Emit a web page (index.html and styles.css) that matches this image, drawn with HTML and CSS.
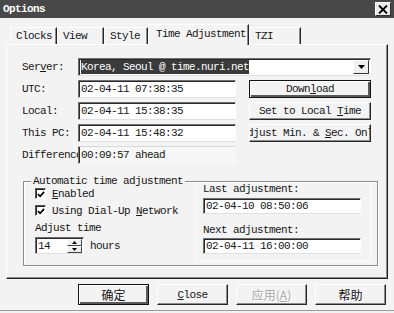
FILE: index.html
```html
<!DOCTYPE html>
<html>
<head>
<meta charset="utf-8">
<link rel="stylesheet" href="styles.css">
</head>
<body>
<div class="window">
  <div class="titlebar">
    <span class="title">Options</span>
    <span class="close"><svg width="10" height="9" viewBox="0 0 10 9"><path d="M1 0.5 L9 8.5 M9 0.5 L1 8.5" stroke="#000" stroke-width="1.8"/></svg></span>
  </div>
  <div class="tabs">
    <div class="tab w-clocks">Clocks</div>
    <div class="tab w-view">View</div>
    <div class="tab w-style">Style</div>
    <div class="tab sel">Time Adjustment</div>
    <div class="tab w-tzi">TZI</div>
  </div>
  <div class="panel">
    <div class="grid">
      <div class="lbl"><span>Ser<u>v</u>er:</span></div>
      <div class="combo">
        <span class="combo-sel">Korea, Seoul @ time.nuri.net</span>
        <span class="combo-btn"><svg width="7" height="4" viewBox="0 0 7 4"><path d="M0 0 H7 L3.5 4 Z" fill="#000"/></svg></span>
      </div>
      <div class="lbl">UTC:</div>
      <div class="field">02-04-11 07:38:35</div>
      <div class="btn default col4"><span>Down<u>l</u>oad</span></div>
      <div class="lbl">Local:</div>
      <div class="field">02-04-11 15:38:35</div>
      <div class="btn col4"><span>Set to Local <u>T</u>ime</span></div>
      <div class="lbl">This PC:</div>
      <div class="field">02-04-11 15:48:32</div>
      <div class="btn col4"><span>Adjust Min. &amp; <u>S</u>ec. Only</span></div>
      <div class="lbl">Difference:</div>
      <div class="field static">00:09:57 ahead</div>
    </div>
    <div class="group">
      <span class="legend">Automatic time adjustment</span>
      <div class="gleft">
        <div class="chkrow"><span class="chk"><svg width="9" height="9" viewBox="0 0 9 9"><path d="M1 4 L3.5 6.5 L8 1.5" stroke="#000" stroke-width="2" fill="none"/></svg></span><span><u>E</u>nabled</span></div>
        <div class="chkrow"><span class="chk"><svg width="9" height="9" viewBox="0 0 9 9"><path d="M1 4 L3.5 6.5 L8 1.5" stroke="#000" stroke-width="2" fill="none"/></svg></span><span>Using Dial-Up <u>N</u>etwork</span></div>
        <div class="txtrow">Adjust time</div>
        <div class="spinrow">
          <div class="spin">
            <span class="spin-val">14</span>
            <span class="spin-btns">
              <span class="sb"><svg width="5" height="3" viewBox="0 0 5 3"><path d="M0 3 H5 L2.5 0 Z" fill="#000"/></svg></span>
              <span class="sb"><svg width="5" height="3" viewBox="0 0 5 3"><path d="M0 0 H5 L2.5 3 Z" fill="#000"/></svg></span>
            </span>
          </div>
          <span>hours</span>
        </div>
      </div>
      <div class="gright">
        <div class="rlabel">Last adjustment:</div>
        <div class="field rfield">02-04-10 08:50:06</div>
        <div class="rlabel next">Next adjustment:</div>
        <div class="field rfield f2">02-04-11 16:00:00</div>
      </div>
    </div>
  </div>
  <div class="footer">
    <div class="btn fbtn default cjk">确定</div>
    <div class="btn fbtn"><span><u>C</u>lose</span></div>
    <div class="btn fbtn disabled cjk"><span>应用(<u>A</u>)</span></div>
    <div class="btn fbtn cjk">帮助</div>
  </div>
</div>
</body>
</html>
```

FILE: styles.css
```css
* { box-sizing: border-box; }
body {
  margin: 0;
  background: #f3f3f3;
  font-family: "Liberation Mono", "Noto Sans CJK SC", monospace;
  font-size: 11px;
  letter-spacing: -0.6px;
  color: #161616;
}
u { text-decoration: underline; text-underline-offset: 1px; }
.window {
  width: 394px;
  height: 313px;
  display: flex;
  flex-direction: column;
  overflow: hidden;
}
.titlebar {
  height: 18px;
  flex: none;
  background: #484848;
  color: #fff;
  display: flex;
  align-items: center;
  justify-content: space-between;
  padding: 0 3px 0 3px;
}
.title { font-weight: bold; font-size: 11px; }
.close {
  width: 16px;
  height: 14px;
  background: #ececec;
  border: 1px solid;
  border-color: #fff #303030 #303030 #fff;
  display: flex;
  align-items: center;
  justify-content: center;
}
.tabs {
  display: flex;
  align-items: flex-end;
  height: 20px;
  margin: 6px 0 0 10px;
  flex: none;
  position: relative;
  z-index: 1;
}
.tab {
  height: 17px;
  border-top: 1px solid #fff;
  border-left: 1px solid #fff;
  border-right: 1px solid #262626;
  box-shadow: inset -1px 0 0 #8c8c8c;
  padding: 0 0 0 5px;
  display: flex;
  align-items: center;
  white-space: nowrap;
}
.w-clocks { width: 47px; }
.w-view { width: 47px; }
.w-style { width: 44px; }
.w-tzi { width: 52px; }
.tab.sel {
  width: 101px;
  height: 21px;
  margin-bottom: -1px;
  background: #f3f3f3;
  padding-left: 7px;
  padding-bottom: 3px;
}
.panel {
  margin: 0 6px;
  height: 235px;
  flex: none;
  border-top: 1px solid #fff;
  border-left: 1px solid #fff;
  border-right: 1px solid #222;
  border-bottom: 1px solid #222;
  box-shadow: inset -1px -1px 0 #8c8c8c;
  padding: 13px 15px 0 15px;
}
.grid {
  display: grid;
  grid-template-columns: 56px 158px 13px 122px;
  grid-auto-rows: 18px;
  row-gap: 4px;
}
.lbl {
  grid-column: 1;
  display: flex;
  align-items: center;
  white-space: nowrap;
  overflow: hidden;
}
.field {
  grid-column: 2;
  background: #fff;
  border: 1px solid;
  border-color: #707070 #fff #e0e0e0 #707070;
  box-shadow: inset 1px 1px 0 #2a2a2a;
  display: flex;
  align-items: center;
  padding-left: 2px;
  white-space: nowrap;
}
.field.static {
  background: #f7f7f7;
  border-color: #d8d8d8 #f7f7f7 #f7f7f7 #707070;
  box-shadow: inset 1px 0 0 #2a2a2a;
}
.combo {
  grid-column: 2 / 5;
  background: #fff;
  border: 1px solid;
  border-color: #707070 #fff #e0e0e0 #707070;
  box-shadow: inset 1px 1px 0 #2a2a2a;
  display: flex;
  align-items: center;
  justify-content: space-between;
  padding: 0 1px 0 2px;
}
.combo-sel {
  background: #3a3a3a;
  color: #fff;
  padding: 1px 0;
  white-space: nowrap;
}
.combo-btn {
  width: 16px;
  height: 14px;
  background: #efefef;
  border: 1px solid;
  border-color: #fff #303030 #303030 #fff;
  display: flex;
  align-items: center;
  justify-content: center;
}
.btn {
  display: flex;
  align-items: center;
  justify-content: center;
  white-space: nowrap;
  overflow: hidden;
  background: #f3f3f3;
  border: 1px solid;
  border-color: #fff #262626 #262626 #fff;
  box-shadow: inset -1px -1px 0 #8c8c8c;
}
.btn > span { flex: none; white-space: pre; }
.col4 { grid-column: 4; }
.btn.default {
  border: 1px solid #111;
  box-shadow: inset 1px 1px 0 #fff, inset -2px -2px 0 #5a5a5a;
}
.group {
  position: relative;
  margin: 17px -6px 0 1px;
  height: 85px;
  border: 1px solid #8c8c8c;
  box-shadow: inset 1px 1px 0 #fff, 1px 1px 0 #fff;
  display: flex;
  padding-left: 11px;
}
.legend {
  position: absolute;
  left: 7px;
  top: -7px;
  background: #f3f3f3;
  padding: 0 2px;
  line-height: 12px;
}
.gleft {
  padding-top: 3px;
  display: flex;
  flex-direction: column;
}
.chkrow {
  height: 17px;
  display: flex;
  align-items: center;
  gap: 6px;
}
.chk {
  width: 11px;
  height: 11px;
  background: #fff;
  border: 1px solid;
  border-color: #555 #fff #fff #555;
  box-shadow: inset 1px 1px 0 #222;
  display: flex;
  align-items: center;
  justify-content: center;
  padding: 1px 0 0 1px;
}
.txtrow {
  height: 17px;
  display: flex;
  align-items: center;
}
.spinrow {
  margin-top: 1px;
  display: flex;
  align-items: center;
  gap: 6px;
}
.spin {
  width: 49px;
  height: 17px;
  background: #fff;
  border: 1px solid;
  border-color: #707070 #fff #e0e0e0 #707070;
  box-shadow: inset 1px 1px 0 #2a2a2a;
  display: flex;
  justify-content: space-between;
  padding: 1px 1px 0 2px;
}
.spin-val { line-height: 14px; }
.spin-btns {
  width: 15px;
  display: flex;
  flex-direction: column;
}
.sb {
  flex: 1;
  background: #efefef;
  border: 1px solid;
  border-color: #fff #404040 #404040 #fff;
  display: flex;
  align-items: center;
  justify-content: center;
}
.gright {
  margin-left: auto;
  margin-right: 6px;
  width: 175px;
  height: 79px;
  border: 1px solid #fdfdfd;
  border-top: none;
  padding: 1px 0 0 6px;
}
.rlabel {
  line-height: 12px;
}
.rlabel.next { margin-top: 10px; }
.rfield {
  width: 158px;
  height: 16px;
  margin-top: 3px;
}
.rfield.f2 { margin-top: 2px; }
.footer {
  flex: none;
  display: flex;
  justify-content: flex-end;
  gap: 8px;
  padding: 5px 8px 0 0;
  height: 32px;
  border-bottom: 1px solid #9a9a9a;
}
.fbtn {
  width: 71px;
  height: 21px;
}
.cjk {
  font-family: "Noto Sans CJK SC", sans-serif;
  font-size: 12px;
  letter-spacing: 0;
}
.disabled {
  color: #a8a8a8;
  text-shadow: 1px 1px 0 #fff;
}
```
